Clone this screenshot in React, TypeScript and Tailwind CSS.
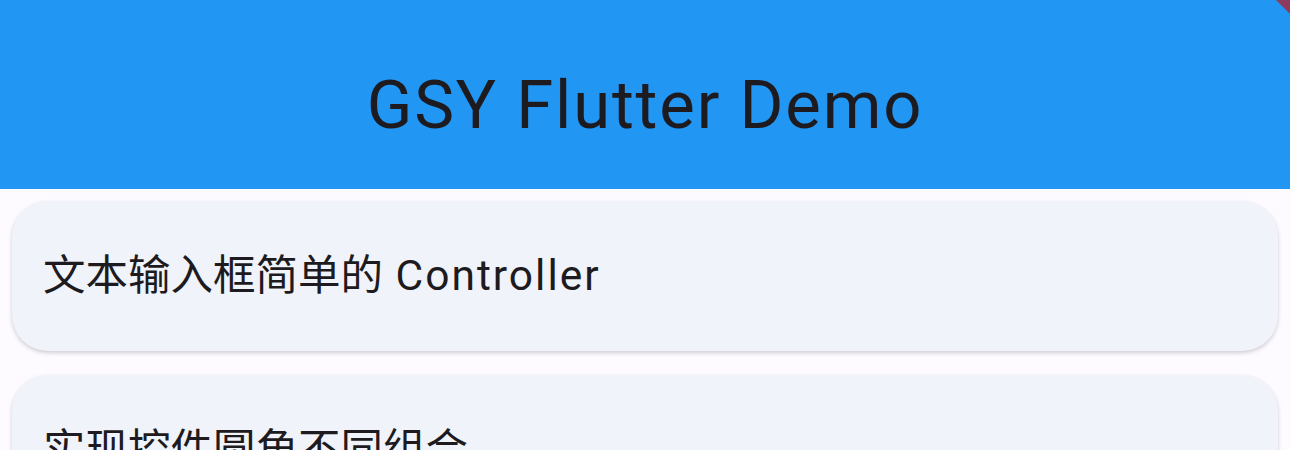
const items = [
  { zh: "文本输入框简单的 ", en: "Controller" },
  { zh: "实现控件圆角不同组合", en: "" },
];

export default function App() {
  return (
    <div className="relative min-h-[450px] overflow-hidden bg-[#fdfbff] font-['Roboto','Noto_Sans_CJK_SC',sans-serif]">
      <header className="flex h-[189px] items-center justify-center bg-[#2196f3] pt-[22px]">
        <h1 className="text-[67px] font-normal leading-none tracking-[1.8px] text-[#1d1b20]">GSY Flutter Demo</h1>
      </header>
      <div className="flex flex-col gap-[24px] px-[12px] pt-[12px]">
        {items.map((t) => (
          <div
            key={t.zh}
            className="flex h-[150px] shrink-0 items-center rounded-[36px] bg-[#f0f3fa] px-[31px] shadow-[0_2px_4px_rgba(0,0,0,0.18)]"
          >
            <span className="whitespace-pre text-[42.5px] leading-none text-[#1d1b20]">
              {t.zh}
              {t.en && <span className="ml-[2px] tracking-[2px]">{t.en}</span>}
            </span>
          </div>
        ))}
      </div>
      <svg className="absolute right-0 top-0" width="14" height="14" viewBox="0 0 14 14">
        <polygon points="0,0 14,0 14,14" fill="#8e3a5c" />
      </svg>
    </div>
  );
}
